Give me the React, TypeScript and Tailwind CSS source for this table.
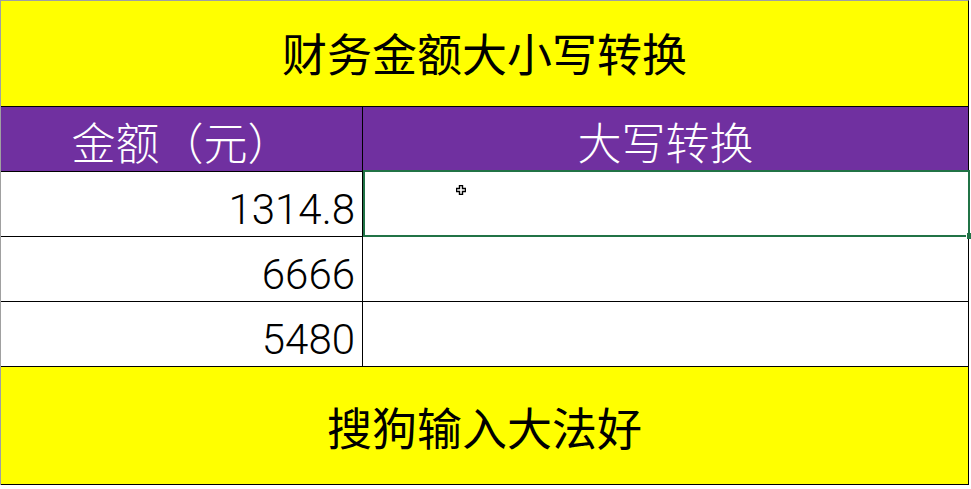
import React from "react";

const cjk = { fontFamily: '"Noto Sans CJK SC", "Noto Sans", sans-serif' };
const num = { fontFamily: 'Roboto, "Liberation Sans", Arial, sans-serif' };

function DataRow({ value }: { value: string }) {
  return (
    <div className="flex h-[65px] border-b border-black">
      <div
        className="w-[362px] border-r border-black flex items-end justify-end pr-[7px] pb-[5px] text-[42px] leading-none text-black font-light"
        style={num}
      >
        {value}
      </div>
      <div className="flex-1 bg-white" />
    </div>
  );
}

export default function App() {
  return (
    <div className="relative w-[971px] h-[489px] bg-white overflow-hidden">
      <div className="w-[969px] border-t border-[#a0a0a0] border-l border-l-[#a0a0a0] border-r border-r-black">
        <div
          className="h-[106px] bg-[#ffff00] border-b border-black flex items-center justify-center text-[45px] text-black leading-none pb-[2px]"
          style={cjk}
        >
          财务金额大小写转换
        </div>
        <div className="flex h-[65px] bg-[#7030a0] border-b border-black">
          <div
            className="w-[362px] border-r border-black flex items-center justify-center text-[44px] text-white leading-none pt-[4px] font-light"
            style={cjk}
          >
            金额（元）
          </div>
          <div
            className="flex-1 flex items-center justify-center text-[44px] text-white leading-none pt-[4px] font-light"
            style={cjk}
          >
            大写转换
          </div>
        </div>
        <DataRow value="1314.8" />
        <DataRow value="6666" />
        <DataRow value="5480" />
        <div
          className="h-[118px] bg-[#ffff00] border-b border-black flex items-center justify-center text-[45px] text-black leading-none pt-[2px]"
          style={cjk}
        >
          搜狗输入大法好
        </div>
      </div>

      {/* selected cell */}
      <div className="absolute left-[363px] top-[170px] w-[607px] h-[67px] border-2 border-[#217346] pointer-events-none" />
      <div className="absolute left-[966px] top-[233px] w-[5px] h-[6px] bg-[#217346] border-l border-white" />

      {/* cursor */}
      <svg className="absolute left-[456px] top-[185px]" width="10" height="10" viewBox="0 0 10 10">
        <path
          d="M3.5 0.5 H6.5 V3.5 H9.5 V6.5 H6.5 V9.5 H3.5 V6.5 H0.5 V3.5 H3.5 Z"
          fill="white"
          stroke="black"
          strokeWidth="1.4"
        />
      </svg>
    </div>
  );
}
